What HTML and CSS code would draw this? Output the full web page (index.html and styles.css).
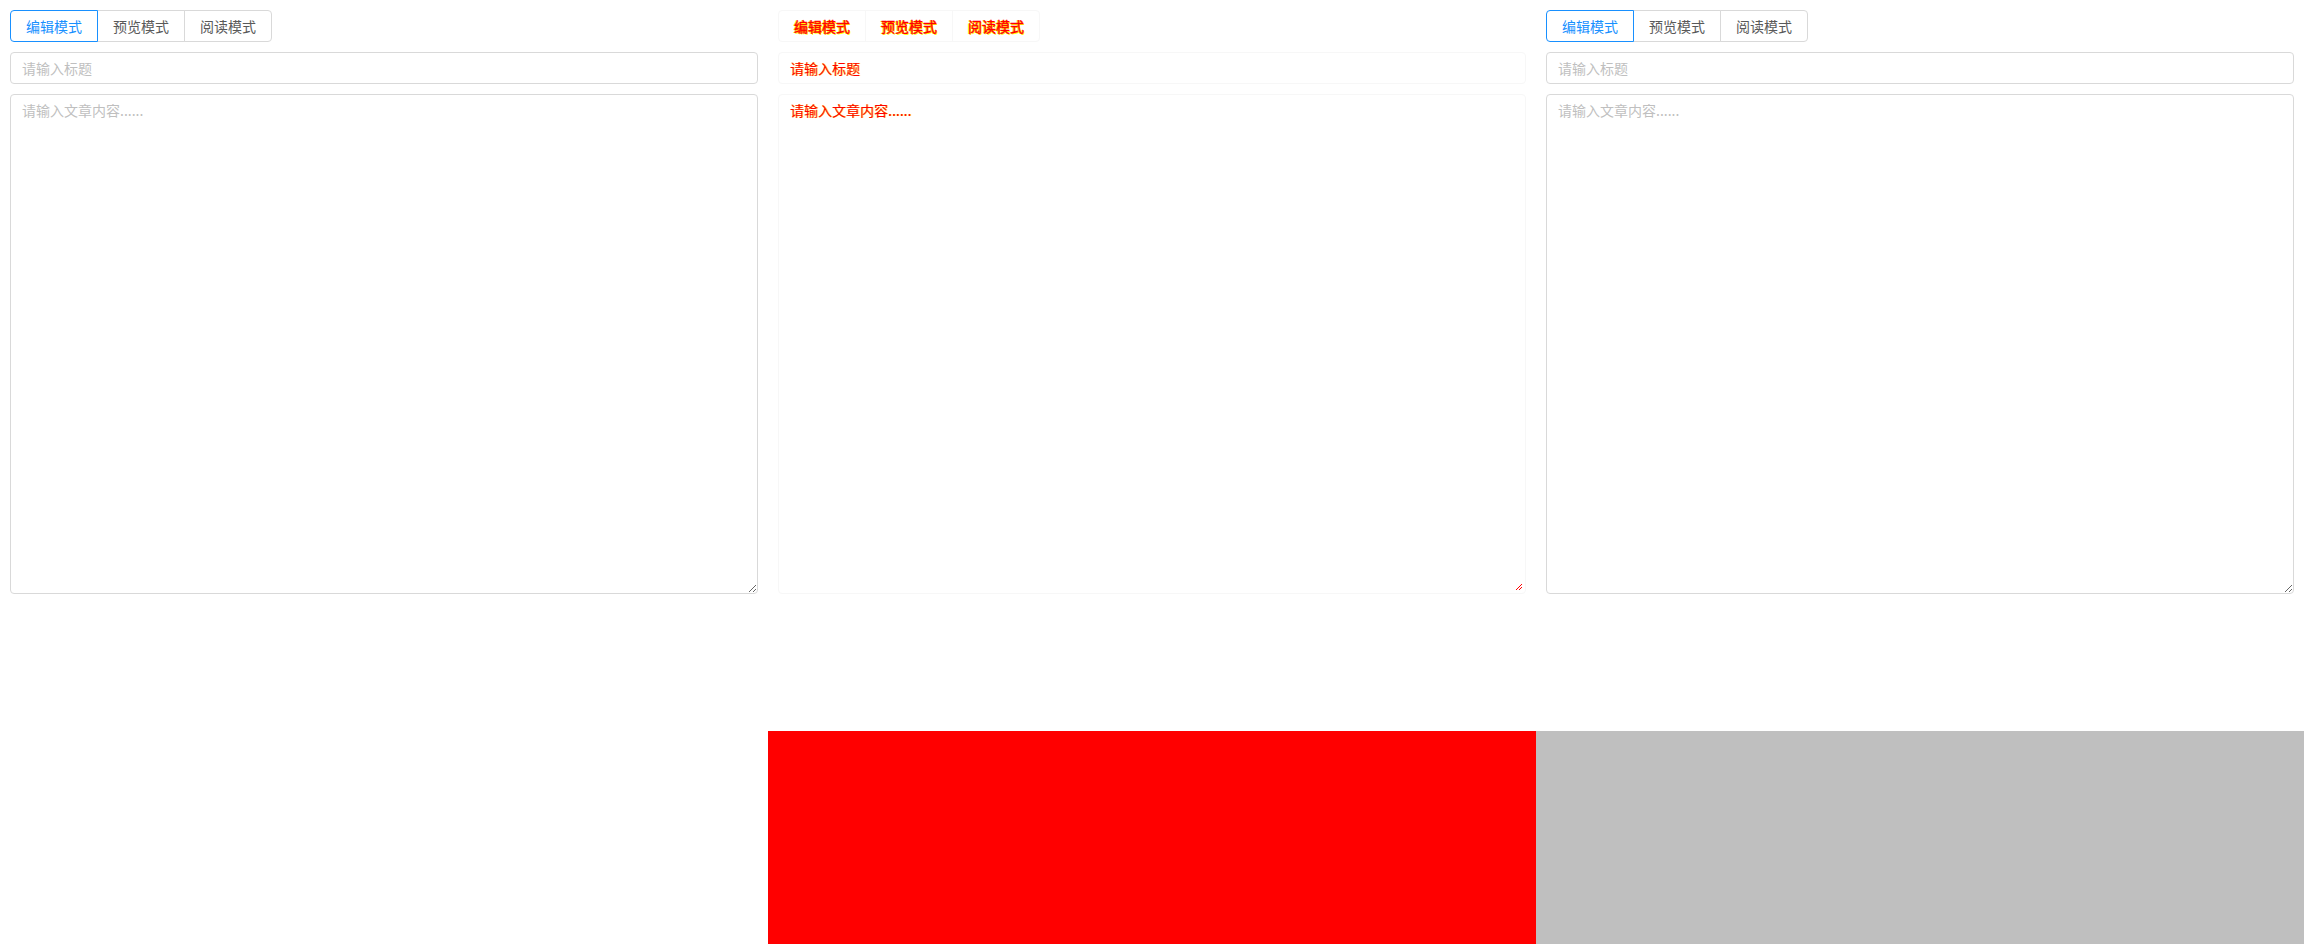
FILE: index.html
```html
<!DOCTYPE html>
<html lang="zh">
<head>
<meta charset="utf-8">
<title>编辑器对比</title>
<link rel="stylesheet" href="styles.css">
</head>
<body>
<div class="grid">
  <section class="panel">
    <div class="btn-group">
      <button class="btn active">编辑模式</button>
      <button class="btn">预览模式</button>
      <button class="btn">阅读模式</button>
    </div>
    <input class="input" type="text" placeholder="请输入标题">
    <textarea class="textarea" placeholder="请输入文章内容......"></textarea>
  </section>

  <section class="panel diff">
    <div class="btn-group">
      <span class="btn">编辑模式</span>
      <span class="btn">预览模式</span>
      <span class="btn">阅读模式</span>
    </div>
    <div class="input">请输入标题</div>
    <div class="textarea">请输入文章内容......
      <svg class="handle" width="8" height="8" viewBox="0 0 8 8"><path d="M7 1 L1 7 M7 4 L4 7" stroke="#f00" stroke-width="1"/></svg>
    </div>
  </section>

  <section class="panel">
    <div class="btn-group">
      <button class="btn active">编辑模式</button>
      <button class="btn">预览模式</button>
      <button class="btn">阅读模式</button>
    </div>
    <input class="input" type="text" placeholder="请输入标题">
    <textarea class="textarea" placeholder="请输入文章内容......"></textarea>
  </section>

  <div class="block"></div>
  <div class="block red"></div>
  <div class="block gray"></div>
</div>
</body>
</html>
```

FILE: styles.css
```css
* { box-sizing: border-box; }
html, body { margin: 0; padding: 0; background: #fff; }
body {
  font-family: "Noto Sans CJK SC", "Noto Sans", sans-serif;
  font-size: 14px;
  color: rgba(0,0,0,0.85);
}
.grid {
  display: grid;
  grid-template-columns: 768px 768px 768px;
  grid-template-rows: 731px 213px;
  width: 2304px;
  height: 944px;
  overflow: hidden;
}
.panel {
  padding: 10px;
  display: flex;
  flex-direction: column;
  gap: 10px;
}
.btn-group {
  display: flex;
  height: 32px;
}
.btn {
  font-family: inherit;
  font-size: 14px;
  line-height: 22px;
  height: 32px;
  padding: 4px 15px;
  width: 88px;
  background: #fff;
  border: 1px solid #d9d9d9;
  color: #595959;
  margin: 0 0 0 -1px;
  border-radius: 0;
  position: relative;
  text-align: center;
  display: block;
}
.btn:first-child { margin-left: 0; border-radius: 4px 0 0 4px; }
.btn:last-child { border-radius: 0 4px 4px 0; }
.btn.active { color: #1890ff; border-color: #1890ff; z-index: 1; }
.input {
  display: block;
  width: 748px;
  height: 32px;
  padding: 4px 11px;
  font-family: inherit;
  font-size: 14px;
  line-height: 22px;
  border: 1px solid #d9d9d9;
  border-radius: 4px;
  color: rgba(0,0,0,0.85);
  outline: none;
  margin: 0;
}
.textarea {
  display: block;
  width: 748px;
  height: 500px;
  padding: 4px 11px;
  font-family: inherit;
  font-size: 14px;
  line-height: 22px;
  border: 1px solid #d9d9d9;
  border-radius: 4px;
  outline: none;
  margin: 0;
  resize: vertical;
}
.input::placeholder, .textarea::placeholder { color: #bfbfbf; }

/* diff panel */
.diff .btn, .diff .input, .diff .textarea {
  border-color: #f7f7f7;
  color: #f00;
}
.diff .btn {
  -webkit-text-stroke: 0.4px #f00;
  text-shadow: 1px 1px 0 #ff0, -1px 0 0 #ff0;
}
.diff .input, .diff .textarea {
  text-shadow: 1px 0 0 rgba(255,230,0,0.8);
}
.diff .textarea { position: relative; }
.handle {
  position: absolute;
  right: 2px;
  bottom: 2px;
}

.block { background: #fff; }
.block.red { background: #f00; }
.block.gray { background: #bfbfbf; }
```
